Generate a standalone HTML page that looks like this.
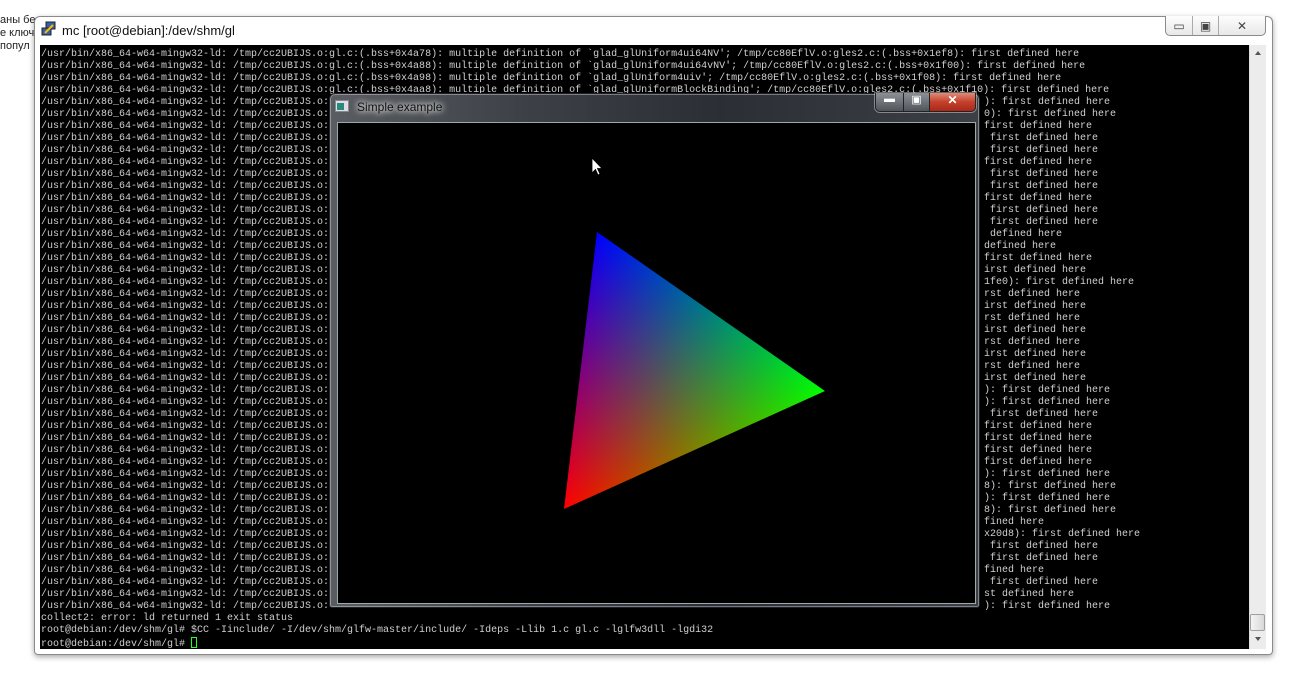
<!DOCTYPE html>
<html><head><meta charset="utf-8"><style>
*{margin:0;padding:0;box-sizing:border-box}
body{width:1291px;height:673px;background:#fff;position:relative;overflow:hidden;font-family:"Liberation Sans",sans-serif}
.bg{position:absolute;left:0;font-size:11px;color:#222;line-height:13px}
#outer{position:absolute;left:34px;top:16px;width:1239px;height:639px;background:#fff;border:1px solid #8a8a8a;border-radius:6px 6px 4px 4px;box-shadow:0 2px 6px rgba(0,0,0,.35)}
#title{position:absolute;left:62px;top:23px;font-size:13px;color:#111}
#term{position:absolute;left:40px;top:45px;width:1209px;height:604px;background:#000;overflow:hidden}
.ln{position:absolute;left:1px;font-family:"Liberation Mono",monospace;font-size:10px;line-height:12px;color:#d0d0d0;white-space:pre;letter-spacing:0}
.rt{position:absolute;left:944px;font-family:"Liberation Mono",monospace;font-size:10px;line-height:12px;color:#d0d0d0;white-space:pre}
#sb{position:absolute;left:1249px;top:45px;width:17px;height:604px;background:#ececec;border-left:1px solid #ddd}
#thumb{position:absolute;left:1250px;top:614px;width:15px;height:17px;background:linear-gradient(90deg,#f4f4f4,#d8d8d8);border:1px solid #a0a0a0;border-radius:2px}
.btns{position:absolute;border:1px solid #8a8a8a;border-top:none;border-radius:0 0 5px 5px;background:linear-gradient(#fdfdfd,#e8e8e8);display:flex}
.btns div{border-right:1px solid #aaa;display:flex;align-items:center;justify-content:center;color:#444;font-size:12px}
#inner{position:absolute;left:329px;top:93px;width:651px;height:515px;background:linear-gradient(90deg,#5a5d62,#3d4147 30%,#2b2f35 60%,#3c4046);border:1px solid #1e2024;border-radius:6px 6px 3px 3px;box-shadow:inset 0 0 0 1px rgba(255,255,255,.35)}
#client{position:absolute;left:337px;top:122px;width:639px;height:482px;background:#000;border:1px solid #9aa;}
</style></head><body>
<div class="bg" style="top:14px">аны без</div>
<div class="bg" style="top:27px">е ключе</div>
<div class="bg" style="top:40px">попул</div>
<div id="outer"></div>
<svg style="position:absolute;left:41px;top:21px" width="16" height="16"><rect x="5" y="1" width="9" height="7" fill="#3a5ca8" stroke="#222"/><rect x="1" y="7" width="9" height="7" fill="#3a5ca8" stroke="#222"/><path d="M4 12 L12 4" stroke="#f0c000" stroke-width="2"/></svg>
<div id="title">mc [root@debian]:/dev/shm/gl</div>
<div class="btns" style="left:1165px;top:16px;height:20px;width:101px"><div style="width:27px">▭</div><div style="width:26px">▣</div><div style="width:46px;border:none">✕</div></div>
<div id="term">
<div class="ln" style="top:4px">/usr/bin/x86_64-w64-mingw32-ld: /tmp/cc2UBIJS.o:gl.c:(.bss+0x4a78): multiple definition of `glad_glUniform4ui64NV'; /tmp/cc80EflV.o:gles2.c:(.bss+0x1ef8): first defined here</div>
<div class="ln" style="top:16px">/usr/bin/x86_64-w64-mingw32-ld: /tmp/cc2UBIJS.o:gl.c:(.bss+0x4a88): multiple definition of `glad_glUniform4ui64vNV'; /tmp/cc80EflV.o:gles2.c:(.bss+0x1f00): first defined here</div>
<div class="ln" style="top:28px">/usr/bin/x86_64-w64-mingw32-ld: /tmp/cc2UBIJS.o:gl.c:(.bss+0x4a98): multiple definition of `glad_glUniform4uiv'; /tmp/cc80EflV.o:gles2.c:(.bss+0x1f08): first defined here</div>
<div class="ln" style="top:40px">/usr/bin/x86_64-w64-mingw32-ld: /tmp/cc2UBIJS.o:gl.c:(.bss+0x4aa8): multiple definition of `glad_glUniformBlockBinding'; /tmp/cc80EflV.o:gles2.c:(.bss+0x1f10): first defined here</div>
<div id="rows"></div>
<div class="ln" style="top:568px">collect2: error: ld returned 1 exit status</div>
<div class="ln" style="top:580px">root@debian:/dev/shm/gl# $CC -Iinclude/ -I/dev/shm/glfw-master/include/ -Ideps -Llib 1.c gl.c -lglfw3dll -lgdi32</div>
<div class="ln" style="top:592px">root@debian:/dev/shm/gl# <span style="display:inline-block;width:6px;height:11px;border:1px solid #2f2;vertical-align:-2px"></span></div>
</div>
<div id="sb"><div style="position:absolute;left:5px;top:6px;border:3px solid transparent;border-bottom:4px solid #555;border-top:none;width:0"></div><div style="position:absolute;left:5px;top:592px;border:3px solid transparent;border-top:4px solid #555;border-bottom:none;width:0"></div></div>
<div id="thumb"></div>
<div id="inner"></div>
<svg style="position:absolute;left:335px;top:100px" width="16" height="14"><rect x="0.5" y="0.5" width="13" height="11" fill="#dde" stroke="#888"/><rect x="2" y="3" width="7" height="7" fill="#2a8a7a"/></svg>
<div style="position:absolute;left:357px;top:100px;font-size:12px;color:#111;text-shadow:0 0 6px #fff,0 0 8px #fff">Simple example</div>
<div style="position:absolute;left:875px;top:93px;width:101px;height:19px;display:flex;border:1px solid #222;border-top:none;border-radius:0 0 5px 5px;overflow:hidden;box-shadow:0 0 0 1px rgba(255,255,255,.4)">
<div style="width:28px;background:linear-gradient(#8c9096,#50555c);color:#fff;text-align:center;font-size:11px;border-right:1px solid #222">▬</div>
<div style="width:26px;background:linear-gradient(#8c9096,#50555c);color:#fff;text-align:center;font-size:11px;border-right:1px solid #222">▣</div>
<div style="flex:1;background:linear-gradient(#e08a78,#c4402a 50%,#a8281a);color:#fff;text-align:center;font-weight:bold;font-size:12px">✕</div></div>
<div id="client"></div>
<svg style="position:absolute;left:0;top:0" width="1291" height="673">
<defs>
<linearGradient id="gr" gradientUnits="userSpaceOnUse" x1="564" y1="509" x2="703" y2="307"><stop offset="0" stop-color="#ff0000"/><stop offset="1" stop-color="#000"/></linearGradient>
<linearGradient id="gb" gradientUnits="userSpaceOnUse" x1="597" y1="232" x2="695" y2="450"><stop offset="0" stop-color="#0000ff"/><stop offset="1" stop-color="#000"/></linearGradient>
<linearGradient id="gg" gradientUnits="userSpaceOnUse" x1="825" y1="391" x2="581" y2="362"><stop offset="0" stop-color="#00ff00"/><stop offset="1" stop-color="#000"/></linearGradient>
</defs>
<g style="isolation:isolate">
<polygon points="597,232 825,391 564,509" fill="url(#gr)"/>
<polygon points="597,232 825,391 564,509" fill="url(#gb)" style="mix-blend-mode:screen"/>
<polygon points="597,232 825,391 564,509" fill="url(#gg)" style="mix-blend-mode:screen"/>
</g>
<path d="M592 158 L592 173 L595.5 169.5 L598 175 L600 174 L597.5 168.5 L602 168.5 Z" fill="#fff" stroke="#000" stroke-width="0.8"/>
</svg>
<script>
var R=["): first defined here","0): first defined here","first defined here"," first defined here"," first defined here","first defined here"," first defined here"," first defined here","first defined here"," first defined here"," first defined here"," defined here","defined here","first defined here","irst defined here","1fe0): first defined here","rst defined here","irst defined here","rst defined here","irst defined here","rst defined here","irst defined here","rst defined here","irst defined here","): first defined here","): first defined here"," first defined here","first defined here","first defined here","first defined here","first defined here","): first defined here","8): first defined here","): first defined here","8): first defined here","fined here","x20d8): first defined here"," first defined here"," first defined here","fined here"," first defined here","st defined here","): first defined here"];
var h="";
for(var i=0;i<R.length;i++){var t=4+12*(i+4);h+='<div class="ln" style="top:'+t+'px">/usr/bin/x86_64-w64-mingw32-ld: /tmp/cc2UBIJS.o:</div><div class="rt" style="top:'+t+'px">'+R[i]+'</div>';}
document.getElementById('rows').innerHTML=h;
</script>
</body></html>
